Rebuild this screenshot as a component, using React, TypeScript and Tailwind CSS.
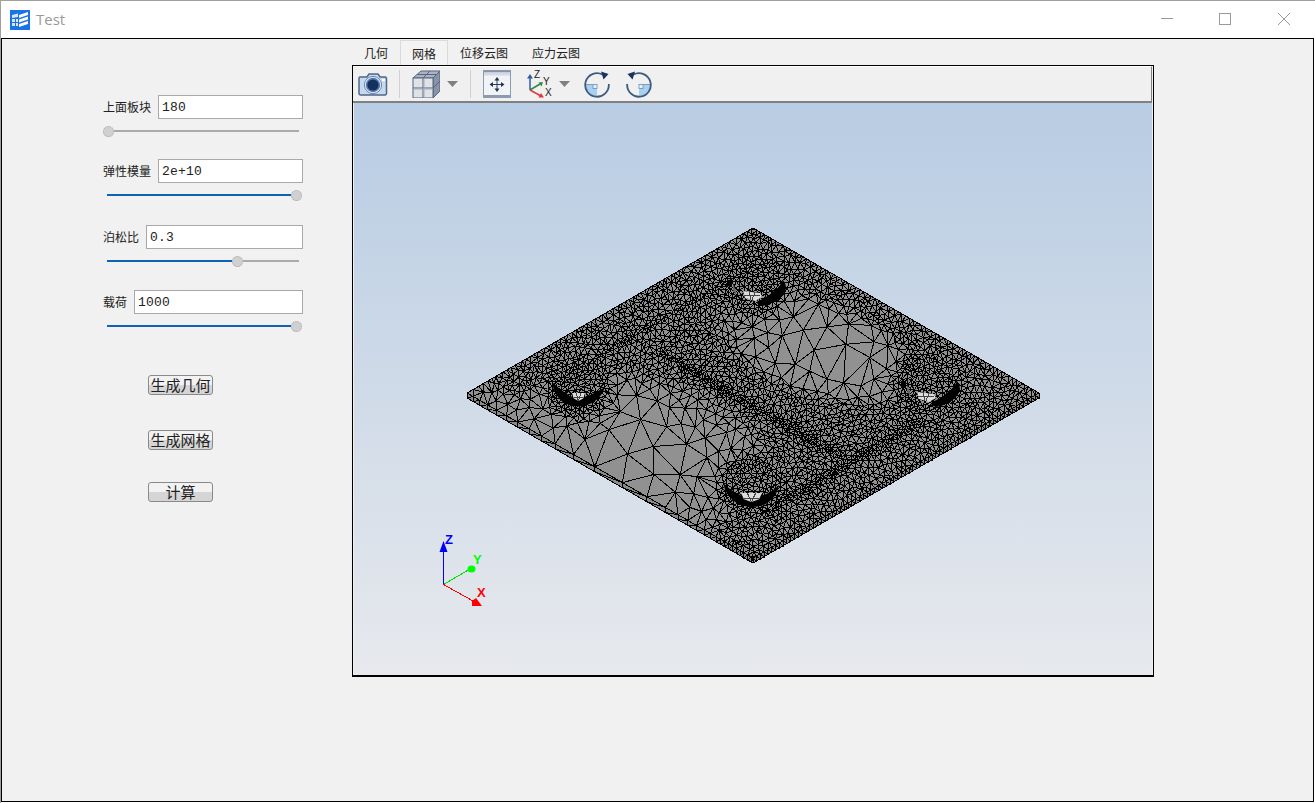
import React, { useMemo } from 'react';

const CJK = "[font-family:'Noto_Sans_CJK_SC',sans-serif]";

// plate corners on screen
const T = { x: 753, y: 228 };
const R = { x: 1039, y: 393 };
const L = { x: 467, y: 393 };
const B = { x: 753, y: 558 };
const THICK = 5;

const rng = (seed: number) => () => {
  seed |= 0;
  seed = (seed + 0x6d2b79f5) | 0;
  let t = Math.imul(seed ^ (seed >>> 15), 1 | seed);
  t = (t + Math.imul(t ^ (t >>> 7), 61 | t)) ^ t;
  return ((t ^ (t >>> 14)) >>> 0) / 4294967296;
};

const toUV = (x: number, y: number) => {
  const a = (x - T.x) / 286;
  const b = (y - T.y) / 165;
  return { u: (a + b) / 2, v: (b - a) / 2 };
};

const segDist = (u: number, v: number, a: number[], b: number[]) => {
  const dx = b[0] - a[0];
  const dy = b[1] - a[1];
  const t = Math.max(0, Math.min(1, ((u - a[0]) * dx + (v - a[1]) * dy) / (dx * dx + dy * dy)));
  return Math.hypot(u - a[0] - t * dx, v - a[1] - t * dy) * 300;
};

const holes = [
  [578, 385],
  [752, 487],
  [752, 285],
  [925, 386],
];

// target spacing of the mesh at a screen point
const sizeAt = (x: number, y: number) => {
  const { u, v } = toUV(x, y);
  let s = 4.2;
  const c1 = Math.exp(-(((u - 0.47) / 0.25) ** 2) - (((v - 0.88) / 0.2) ** 2));
  const c2 = Math.exp(-(((u - 0.48) / 0.21) ** 2) - (((v - 0.25) / 0.13) ** 2));
  const c3 = Math.exp(-(((u - 0.42) / 0.45) ** 4) - (((v - 1) / 0.1) ** 2));
  s = Math.max(s, 44 * c1, 34 * c2, 14 * c3);
  const near = [
    2.2 + 0.22 * segDist(u, v, [0.22, 0.54], [0.84, 0.54]),
    2.2 + 0.22 * segDist(u, v, [0.88, 0.3], [0.88, 0.84]),
    2.8 + 0.25 * segDist(u, v, [0.12, 0.14], [0.12, 0.72]),
  ];
  for (const n of near) s = Math.min(s, n);
  for (const h of holes) {
    const d = Math.hypot(x - h[0], y - h[1]);
    s = Math.min(s, d < 30 ? 3.6 : 3.6 + 0.5 * (d - 30));
  }
  return s;
};

const buildMesh = () => {
  const rand = rng(20240611);
  const pts: [number, number][] = [];
  const edgePts: { lb: [number, number][]; br: [number, number][] } = { lb: [], br: [] };

  const walk = (a: { x: number; y: number }, b: { x: number; y: number }, out?: [number, number][]) => {
    const len = Math.hypot(b.x - a.x, b.y - a.y);
    let d = 0;
    while (d < len) {
      const x = a.x + ((b.x - a.x) * d) / len;
      const y = a.y + ((b.y - a.y) * d) / len;
      pts.push([x + (rand() - 0.5) * 0.02, y + (rand() - 0.5) * 0.02]);
      if (out) out.push([x, y]);
      d += Math.max(2.6, sizeAt(x, y) * 1.05);
    }
  };
  walk(T, R);
  walk(R, B, edgePts.br);
  walk(L, B, edgePts.lb);
  walk(L, T);
  edgePts.br.push([B.x, B.y]);
  edgePts.lb.push([B.x, B.y]);

  // variable radius dart throwing with a coarse hash
  const CELL = 8;
  const hash = new Map<string, [number, number][]>();
  const put = (p: [number, number]) => {
    const k = Math.floor(p[0] / CELL) + ':' + Math.floor(p[1] / CELL);
    const c = hash.get(k);
    if (c) c.push(p);
    else hash.set(k, [p]);
  };
  pts.forEach(put);
  for (let i = 0; i < 130000; i++) {
    const x = L.x + rand() * 572;
    const y = T.y + rand() * 330;
    const { u, v } = toUV(x, y);
    if (u < 0.005 || v < 0.005 || u > 0.995 || v > 0.995) continue;
    const r = sizeAt(x, y);
    const reach = Math.ceil(r / CELL);
    const cx = Math.floor(x / CELL);
    const cy = Math.floor(y / CELL);
    let ok = true;
    for (let a = cx - reach; a <= cx + reach && ok; a++) {
      for (let b = cy - reach; b <= cy + reach && ok; b++) {
        const c = hash.get(a + ':' + b);
        if (!c) continue;
        for (const q of c) {
          if (Math.hypot(q[0] - x, q[1] - y) < r) {
            ok = false;
            break;
          }
        }
      }
    }
    if (ok) {
      const p: [number, number] = [x, y];
      pts.push(p);
      put(p);
    }
  }

  // Bowyer-Watson
  for (let i = pts.length - 1; i > 0; i--) {
    const j = Math.floor(rand() * (i + 1));
    [pts[i], pts[j]] = [pts[j], pts[i]];
  }
  const n = pts.length;
  const all = [...pts, [-9000, -9000], [11000, -9000], [750, 12000]] as [number, number][];
  type Tri = { a: number; b: number; c: number; x: number; y: number; r: number };
  const make = (a: number, b: number, c: number): Tri => {
    const [ax, ay] = all[a];
    const [bx, by] = all[b];
    const [cx, cy] = all[c];
    const d = 2 * (ax * (by - cy) + bx * (cy - ay) + cx * (ay - by)) || 1e-9;
    const a2 = ax * ax + ay * ay;
    const b2 = bx * bx + by * by;
    const c2 = cx * cx + cy * cy;
    const x = (a2 * (by - cy) + b2 * (cy - ay) + c2 * (ay - by)) / d;
    const y = (a2 * (cx - bx) + b2 * (ax - cx) + c2 * (bx - ax)) / d;
    return { a, b, c, x, y, r: (ax - x) ** 2 + (ay - y) ** 2 };
  };
  let tris: Tri[] = [make(n, n + 1, n + 2)];
  for (let i = 0; i < n; i++) {
    const [px, py] = all[i];
    const keep: Tri[] = [];
    const count = new Map<number, number>();
    const N = n + 3;
    const add = (p: number, q: number) => {
      const k = p < q ? p * N + q : q * N + p;
      count.set(k, (count.get(k) || 0) + 1);
    };
    for (const t of tris) {
      if ((px - t.x) ** 2 + (py - t.y) ** 2 < t.r) {
        add(t.a, t.b);
        add(t.b, t.c);
        add(t.c, t.a);
      } else keep.push(t);
    }
    count.forEach((v, k) => {
      if (v === 1) keep.push(make(Math.floor(k / N), k % N, i));
    });
    tris = keep;
  }

  const seen = new Set<number>();
  const parts: string[] = [];
  const N = n + 3;
  const line = (p: number, q: number) => {
    if (p >= n || q >= n) return;
    const k = p < q ? p * N + q : q * N + p;
    if (seen.has(k)) return;
    seen.add(k);
    parts.push(`M${all[p][0].toFixed(1)} ${all[p][1].toFixed(1)}L${all[q][0].toFixed(1)} ${all[q][1].toFixed(1)}`);
  };
  for (const t of tris) {
    line(t.a, t.b);
    line(t.b, t.c);
    line(t.c, t.a);
  }

  // side faces
  let side = '';
  for (const list of [edgePts.lb, edgePts.br]) {
    list.forEach((p, i) => {
      side += `M${p[0].toFixed(1)} ${p[1].toFixed(1)}V${(p[1] + THICK).toFixed(1)}`;
      const nx = list[i + 1];
      if (nx) side += `L${nx[0].toFixed(1)} ${nx[1].toFixed(1)}`;
    });
  }
  return { d: parts.join(''), side };
};

const Crescent = ({ d, lx, ly, lw, lh }: { d: string; lx: number; ly: number; lw: number; lh: number }) => (
  <g>
    <path d={d} fill="#000" />
    <path
      d={`M${lx} ${ly}l${lw} 0l${-lw * 0.14} ${lh * 0.7}l${-lw * 0.36} ${lh * 0.3}l${-lw * 0.36} ${-lh * 0.3}z`}
      fill="#dcdcdc"
    />
    <path
      d={`M${lx + lw * 0.3} ${ly}l${lw * 0.2} ${lh}M${lx + lw * 0.7} ${ly}l${-lw * 0.2} ${lh}M${lx + lw * 0.15} ${ly + lh * 0.6}l${lw * 0.7} 0`}
      stroke="#444"
      strokeWidth="1"
      shapeRendering="crispEdges"
      fill="none"
    />
  </g>
);

const BackCylinder = () => (
  <g>
    <path d="M727 280h5v7l-5-1z" fill="#000" />
    <path d="M733 284l3 7v4l-3-5z" fill="#6a6a6a" />
    <path d="M743 291l17 2l2 4l-7 4l-10-3z" fill="#dcdcdc" />
    <path d="M749 291l2 9M755 292l-3 8M744 295h16" stroke="#444" shapeRendering="crispEdges" />
    <path d="M783 280Q789 288 783 295Q775 304 762 306Q755 304 758 301Q768 297 774 291Q780 287 783 280z" fill="#000" />
  </g>
);

const Mesh = () => {
  const { d, side } = useMemo(buildMesh, []);
  return (
    <svg viewBox="354 103 798 572" className="absolute inset-0 h-full w-full">
      <polygon
        points={`${L.x},${L.y} ${B.x},${B.y} ${R.x},${R.y} ${R.x},${R.y + THICK} ${B.x},${B.y + THICK} ${L.x},${L.y + THICK}`}
        fill="#8a8a8a"
      />
      <polygon points={`${T.x},${T.y} ${R.x},${R.y} ${B.x},${B.y} ${L.x},${L.y}`} fill="#919191" />
      <path d={d} stroke="#000" strokeWidth="1" fill="none" shapeRendering="crispEdges" />
      <path d={side} stroke="#000" strokeWidth="1" fill="none" shapeRendering="crispEdges" />
      <path
        d={`M${L.x} ${L.y + THICK}L${B.x} ${B.y + THICK}L${R.x} ${R.y + THICK}M${L.x} ${L.y}L${B.x} ${B.y}L${R.x} ${R.y}L${T.x} ${T.y}Z`}
        stroke="#000"
        fill="none"
        shapeRendering="crispEdges"
      />

      <Crescent d="M552 382Q554 396 564 403Q578 410 592 403Q602 397 605 387Q597 392 588 396Q578 400 570 396Q560 390 552 382z" lx={572} ly={393} lw={13} lh={8} />
      <Crescent d="M723 483Q726 497 738 504Q752 510 766 504Q777 497 779 485Q772 492 764 495Q752 500 742 496Q731 491 723 483z" lx={741} ly={493} lw={21} lh={9} />
      <BackCylinder />
      <g transform="translate(174 101)">
        <BackCylinder />
      </g>

      {/* triad */}
      <path d="M443.500 584.500V552" stroke="#0000ff" strokeWidth="1" shapeRendering="crispEdges" />
      <path d="M443.500 541l4 11h-8z" fill="#0000ff" />
      <path d="M443.500 584.500L470 569" stroke="#00e000" strokeWidth="1" shapeRendering="crispEdges" />
      <ellipse cx="471.500" cy="569" rx="4" ry="3.500" fill="#00ff00" />
      <path d="M443.500 584.500L473 601" stroke="#ff0000" strokeWidth="1" shapeRendering="crispEdges" />
      <path d="M472 601l4-3l6 8h-10z" fill="#ff0000" />
      <text x="445" y="544" fontFamily="Liberation Sans, sans-serif" fontWeight="700" fontSize="13" fill="#0000ff">Z</text>
      <text x="473" y="564" fontFamily="Liberation Sans, sans-serif" fontWeight="700" fontSize="13" fill="#00ff00">Y</text>
      <text x="477" y="597" fontFamily="Liberation Sans, sans-serif" fontWeight="700" fontSize="13" fill="#ff0000">X</text>
    </svg>
  );
};

const Slider = ({ before, after }: { before: number; after: number }) => (
  <div className="mt-[7px] flex h-[10px] items-center" style={{ marginLeft: before > 0 ? 4 : 0 }}>
    {before > 0 && <div className="h-[2px] bg-[#0f62b5]" style={{ width: before }} />}
    <div className="h-[11px] w-[11px] shrink-0 rounded-full border border-dotted border-[#a8a8a8] bg-[#d0d0d0]" />
    {after > 0 && <div className="h-[2px] bg-[#ababab]" style={{ width: after }} />}
  </div>
);

const Field = ({ label, value, className, before, after }: { label: string; value: string; className: string; before: number; after: number }) => (
  <div className={`w-[200px] ${className}`}>
    <div className="flex h-[24px] items-center gap-[7px]">
      <span className={`${CJK} shrink-0 text-[12px] leading-none text-[#222]`}>{label}</span>
      <input
        readOnly
        value={value}
        className="h-[24px] min-w-0 flex-1 border border-[#a9a9a9] bg-white pl-[3px] pt-[1px] [font-family:'Liberation_Mono',monospace] text-[13px] tracking-[0.2px] text-[#222] outline-none"
      />
    </div>
    <Slider before={before} after={after} />
  </div>
);

const PushButton = ({ label, className }: { label: string; className: string }) => (
  <button
    className={`${CJK} ml-[45px] flex h-[20px] w-[65px] items-center justify-center rounded-[3px] border border-[#8a8a8a] bg-[linear-gradient(#f2f2f2_50%,#d5d5d5_50%)] pb-[2px] text-[15px] leading-none text-[#222] ${className}`}
  >
    {label}
  </button>
);

const CameraIcon = () => (
  <svg viewBox="0 0 30 28" className="h-[28px] w-[30px]">
    <path d="M2 7h7l2-3h9l2 3h5a1.500 1.500 0 0 1 1.500 1.500v15a1.500 1.500 0 0 1-1.500 1.500H2.500A1.500 1.500 0 0 1 1 23.500v-15A1.500 1.500 0 0 1 2 7z" fill="#c6d9ef" stroke="#4f668a" strokeWidth="1.500" />
    <circle cx="15" cy="15" r="8.600" fill="#e8eef6" stroke="#6f87a8" strokeWidth="1" />
    <circle cx="15" cy="15" r="6.400" fill="#16305c" stroke="#4f7cb8" strokeWidth="1.600" />
    <rect x="24" y="9" width="3" height="2" fill="#fff" />
  </svg>
);

const CubeIcon = () => (
  <svg viewBox="0 0 28 28" className="h-[28px] w-[28px]">
    <path d="M1 8L9 1H28L21 8Z" fill="#aab4c3" stroke="#56657e" />
    <path d="M21 8L28 1V21L21 28Z" fill="#8793a6" stroke="#56657e" />
    <rect x="1" y="8" width="20" height="20" fill="#dfe2e6" stroke="#56657e" />
    <path d="M11 8V28M1 18H21M11 8L18 1M5 4.500H24.500M21 18L28 11" stroke="#56657e" fill="none" />
    <path d="M12 8.500V27.500M1.500 19H20.500" stroke="#a4adba" fill="none" />
  </svg>
);

const FitIcon = () => (
  <svg viewBox="0 0 28 28" className="h-[28px] w-[28px]">
    <rect x="0.500" y="0.500" width="27" height="27" fill="#f1f3f6" stroke="#8c9ab2" />
    <rect x="1" y="1" width="26" height="1.500" fill="#8494ae" />
    <rect x="1" y="2.500" width="26" height="3" fill="#d5dae2" />
    <rect x="1" y="25" width="26" height="2.500" fill="#8c9ab2" />
    <path d="M14 9v11M8.500 14.500h11" stroke="#2a3f60" strokeWidth="1" />
    <path d="M14 7l2.500 3.500h-5zM14 22l2.500-3.500h-5zM6.500 14.500l3.500-2.500v5zM21.500 14.500l-3.500-2.500v5z" fill="#1f3456" />
  </svg>
);

const AxesIcon = () => (
  <svg viewBox="0 0 28 28" className="h-[28px] w-[28px]">
    <path d="M4 20V7" stroke="#2f5ea8" strokeWidth="1.500" />
    <path d="M4 4l3 4.500H1z" fill="#2f5ea8" />
    <path d="M4 20L14 14" stroke="#2e8b3c" strokeWidth="1.500" />
    <path d="M17 12l-1.500 4.500l-3-4z" fill="#2e8b3c" />
    <path d="M4 20L15 26" stroke="#e0393e" strokeWidth="1.500" />
    <path d="M18 27.500l-5.500 0l2.500-4.500z" fill="#e0393e" />
    <path d="M4 20h.01" stroke="#111" strokeWidth="2" />
    <text x="8" y="8" fontSize="10" fontFamily="Liberation Sans, sans-serif" fill="#222">Z</text>
    <text x="17" y="15" fontSize="10" fontFamily="Liberation Sans, sans-serif" fill="#222">Y</text>
    <text x="19" y="26" fontSize="10" fontFamily="Liberation Sans, sans-serif" fill="#222">X</text>
  </svg>
);

const RotateIcon = ({ flip }: { flip?: boolean }) => (
  <svg viewBox="0 0 28 28" className={`h-[28px] w-[28px] ${flip ? '-scale-x-100' : ''}`}>
    <path d="M2.500 14.500H14V26A12 12 0 0 1 2.500 14.500Z" fill="#a9d0ee" />
    <rect x="10" y="14.500" width="4" height="4" fill="#e8f2fb" stroke="#5b8fc0" strokeWidth="0.800" />
    <path d="M2.300 14.500H14" stroke="#7f9cbc" strokeWidth="1" />
    <path d="M19.500 4.500A11.800 11.800 0 1 0 25.800 14" fill="none" stroke="#3d5a80" strokeWidth="1.800" />
    <path d="M18 1.500L25.500 4L20.500 9.500Z" fill="#16335c" />
  </svg>
);

const Caret = () => (
  <svg viewBox="0 0 11 6" className="h-[6px] w-[11px]">
    <path d="M0 0H11L5.500 6Z" fill="#808080" />
  </svg>
);

const Logo = () => (
  <svg viewBox="0 0 20 20" className="h-[20px] w-[20px]">
    <rect width="20" height="20" fill="#1a73e6" />
    <path d="M9 5L18 2V5L9 8ZM9 9.500L18 6.500V9.500L9 12.500ZM9 14L18 11V14L9 17Z" fill="#fff" />
    <path d="M2 5L8 3.500V7L2 8ZM2 9H5V12H2ZM6 9H8V12H6ZM2 13H5V16H2ZM6 13H8V16H6Z" fill="#d8e8fb" />
  </svg>
);

const tabs = ['几何', '网格', '位移云图', '应力云图'];

export default function App() {
  return (
    <div className="flex h-[803px] w-[1315px] flex-col overflow-hidden border-l border-t border-[#a0a0a0] bg-white pr-[1px]">
      {/* title bar */}
      <div className="flex h-[37px] shrink-0 items-center">
        <div className="ml-[9px]">
          <Logo />
        </div>
        <span className="ml-[6px] [font-family:'Open_Sans',sans-serif] text-[15px] text-[#9a9a9a]">Test</span>
        <div className="ml-auto flex items-center pb-[2px] pr-[24px]">
          <svg viewBox="0 0 12 12" className="h-[12px] w-[12px]">
            <path d="M0 5.500H12" stroke="#9a9a9a" />
          </svg>
          <svg viewBox="0 0 12 12" className="ml-[46px] h-[12px] w-[12px]">
            <rect x="0.500" y="0.500" width="11" height="11" fill="none" stroke="#9a9a9a" />
          </svg>
          <svg viewBox="0 0 12 12" className="ml-[47px] h-[12px] w-[12px]">
            <path d="M0 0L12 12M12 0L0 12" stroke="#9a9a9a" />
          </svg>
        </div>
      </div>

      {/* window body */}
      <div className="flex h-[764px] shrink-0 border border-black bg-[#f1f1f1]">
        <div className="w-[350px] shrink-0 pl-[101px] pt-[56px]">
          <Field label="上面板块" value="180" className="" before={0} after={185} />
          <Field label="弹性模量" value="2e+10" className="mt-[23px]" before={184} after={0} />
          <Field label="泊松比" value="0.3" className="mt-[25px]" before={125} after={56} />
          <Field label="载荷" value="1000" className="mt-[24px]" before={184} after={0} />
          <PushButton label="生成几何" className="mt-[44px]" />
          <PushButton label="生成网格" className="mt-[35px]" />
          <PushButton label="计算" className="mt-[32px]" />
        </div>

        <div className="w-[802px] shrink-0">
          <div className="mt-[1px] flex h-[25px]">
            {tabs.map((t) => (
              <div
                key={t}
                className={`${CJK} flex items-center pt-[1px] text-[12px] leading-none text-[#222] ${
                  t === '网格' ? 'border-x border-t border-[#dadada] bg-[#f3f3f3] px-[11px]' : 'px-[12px]'
                }`}
              >
                {t}
              </div>
            ))}
          </div>
          <div className="flex h-[612px] flex-col border border-b-2 border-black">
            <div className="mr-[1px] flex h-[37px] shrink-0 items-center border-b-2 border-r border-t border-b-[#808080] border-r-[#808080] border-t-white bg-[#f0f0f0] pl-[5px]">
              <CameraIcon />
              <div className="ml-[11px] h-[28px] w-[1px] bg-[#d0d0d0]" />
              <div className="ml-[12px]">
                <CubeIcon />
              </div>
              <div className="ml-[7px]">
                <Caret />
              </div>
              <div className="ml-[12px] h-[28px] w-[1px] bg-[#d0d0d0]" />
              <div className="ml-[12px]">
                <FitIcon />
              </div>
              <div className="ml-[15px]">
                <AxesIcon />
              </div>
              <div className="ml-[5px]">
                <Caret />
              </div>
              <div className="ml-[13px]">
                <RotateIcon />
              </div>
              <div className="ml-[14px]">
                <RotateIcon flip />
              </div>
            </div>
            <div className="relative mx-[1px] min-h-0 flex-1 bg-gradient-to-b from-[#b8cce3] to-[#e7e9ed]">
              <Mesh />
            </div>
          </div>
        </div>
      </div>
    </div>
  );
}
